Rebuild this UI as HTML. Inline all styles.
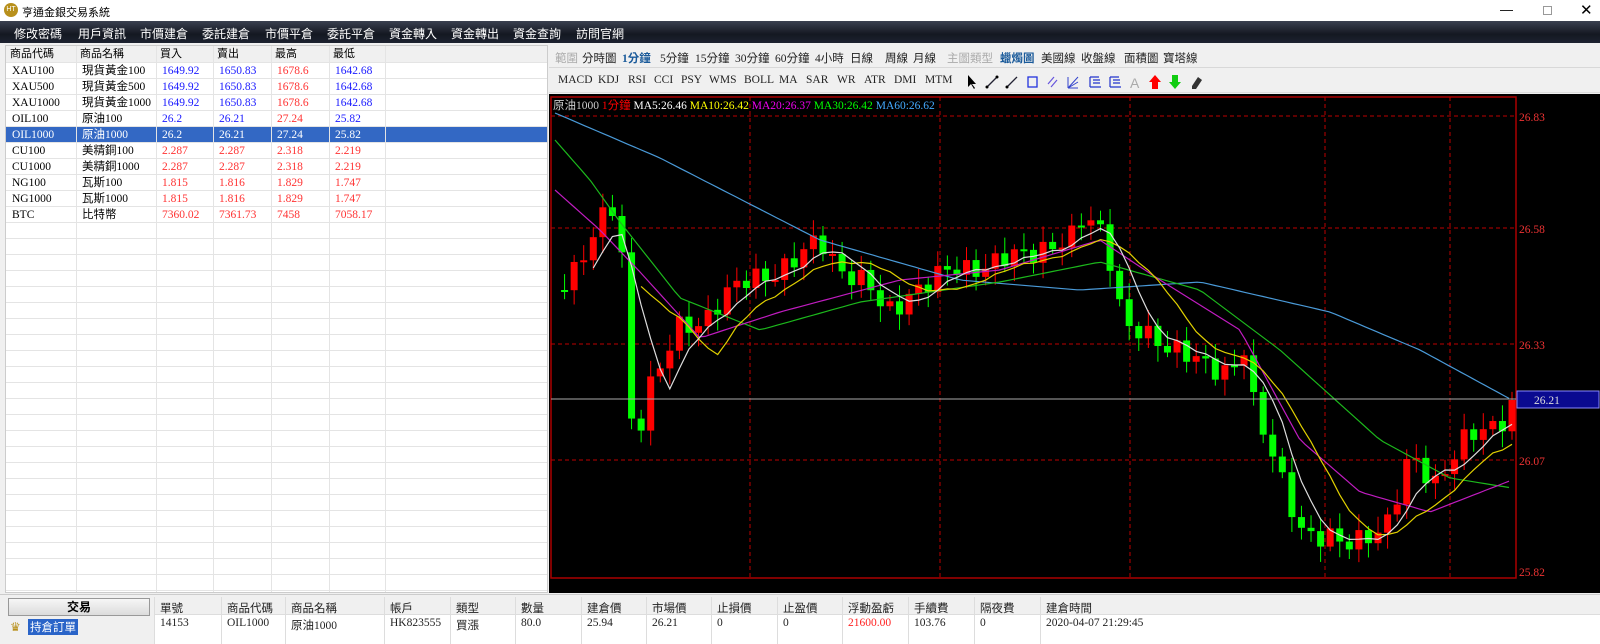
<!DOCTYPE html><html><head><meta charset="utf-8"><style>
*{margin:0;padding:0;box-sizing:border-box;white-space:nowrap}
body{width:1600px;height:644px;overflow:hidden;background:#f0f0f0;font-family:"Liberation Serif","Noto Sans CJK TC",serif;font-size:12px;position:relative}
.abs{position:absolute}
#title{left:0;top:0;width:1600px;height:21px;background:#fff;font-family:"Liberation Sans","Noto Sans CJK TC",sans-serif;font-size:11px}
#menu{left:0;top:21px;width:1600px;height:22px;background:linear-gradient(#3a4050,#141821 60%,#1c2230);color:#fff;font-family:"Liberation Sans","Noto Sans CJK TC",sans-serif;font-size:12px}
#menu span{position:absolute;top:4px}
#list{left:5px;top:45px;width:543px;height:548px;background:#fff;border:1px solid #ccc;overflow:hidden}
.row{position:absolute;left:0;width:543px;height:17px;border-bottom:1px solid #e4e4e4}
.row span{position:absolute;top:0;font-size:11.5px;line-height:16px}
.row i{position:absolute;top:0;width:1px;height:17px;background:#e4e4e4}
.b{color:#1a1aff}.r{color:#ff3333}
.tb{font-family:"Liberation Serif","Noto Sans CJK TC",serif;font-size:11.5px;color:#222;width:1600px;height:644px;pointer-events:none}
.tb span{position:absolute}
</style></head><body>
<div id="title" class="abs">
<div class="abs" style="left:4px;top:3px;width:14px;height:14px;border-radius:50%;background:#b8901c;color:#fff;font-size:7px;line-height:14px;text-align:center">HT</div>
<span class="abs" style="left:22px;top:4px">亨通金銀交易系統</span>
<span class="abs" style="left:1500px;top:2px;font-size:13px">—</span>
<div class="abs" style="left:1543px;top:6px;width:9px;height:9px;border:1px solid #999"></div>
<span class="abs" style="left:1580px;top:1px;font-size:15px">✕</span>
</div>
<div id="menu" class="abs">
<span style="left:14px">修改密碼</span><span style="left:78px">用戶資訊</span><span style="left:140px">市價建倉</span><span style="left:202px">委託建倉</span><span style="left:265px">市價平倉</span><span style="left:327px">委託平倉</span><span style="left:389px">資金轉入</span><span style="left:451px">資金轉出</span><span style="left:513px">資金查詢</span><span style="left:576px">訪問官網</span>
</div>
<div id="list" class="abs"></div>
<div class="abs" style="left:549px;top:45px;width:1051px;height:48px;background:#f0f0f0;border-bottom:1px solid #ddd"></div>
<div class="abs" style="left:549px;top:67px;width:1051px;height:1px;background:#d8d8d8"></div>
<div class="abs tb" style="left:0;top:0">
<span style="left:555px;top:50px;color:#aaa">範圍</span><span style="left:582px;top:50px">分時圖</span><span style="left:622px;top:50px;color:#1a5a9a;font-weight:bold">1分鐘</span><span style="left:660px;top:50px">5分鐘</span><span style="left:695px;top:50px">15分鐘</span><span style="left:735px;top:50px">30分鐘</span><span style="left:775px;top:50px">60分鐘</span><span style="left:815px;top:50px">4小時</span><span style="left:850px;top:50px">日線</span><span style="left:885px;top:50px">周線</span><span style="left:913px;top:50px">月線</span><span style="left:947px;top:50px;color:#aaa">主圖類型</span><span style="left:1000px;top:50px;color:#1a5a9a;font-weight:bold">蠟燭圖</span><span style="left:1041px;top:50px">美國線</span><span style="left:1081px;top:50px">收盤線</span><span style="left:1124px;top:50px">面積圖</span><span style="left:1163px;top:50px">寶塔線</span>
<span style="left:558px;top:74px">MACD</span><span style="left:598px;top:74px">KDJ</span><span style="left:628px;top:74px">RSI</span><span style="left:654px;top:74px">CCI</span><span style="left:681px;top:74px">PSY</span><span style="left:709px;top:74px">WMS</span><span style="left:744px;top:74px">BOLL</span><span style="left:779px;top:74px">MA</span><span style="left:806px;top:74px">SAR</span><span style="left:837px;top:74px">WR</span><span style="left:864px;top:74px">ATR</span><span style="left:894px;top:74px">DMI</span><span style="left:925px;top:74px">MTM</span>
</div>
<svg class="abs" style="left:960px;top:72px" width="250" height="20">
<path d="M8 3l0 12 3-3 3 5 1-1-3-4 4 0z" fill="#000"/>
<line x1="27" y1="15" x2="37" y2="5" stroke="#223" stroke-width="1.3"/><circle cx="27" cy="15" r="1.5"/><circle cx="37" cy="5" r="1.5"/>
<line x1="47" y1="15" x2="57" y2="5" stroke="#223" stroke-width="1.3"/><circle cx="47" cy="15" r="1.5"/>
<rect x="68" y="5" width="9" height="10" fill="none" stroke="#2233dd" stroke-width="1.3"/>
<path d="M88 12l6-7M91 15l6-7" stroke="#6655dd" stroke-width="1.2"/>
<path d="M108 16l10-11M108 16l10-6M108 16l10 0M108 5v11" stroke="#3344cc" stroke-width="1"/>
<path d="M130 5h9M130 5v10M133 8h7M133 11h7M130 15h11" stroke="#2233cc" stroke-width="1.2" fill="none"/>
<path d="M150 5h9M150 5v10M153 8h7M153 11h7M150 15h11" stroke="#2233cc" stroke-width="1.2" fill="none"/>
<text x="170" y="16" fill="#aaa" font-size="14" font-family="Liberation Sans">A</text>
<path d="M195 3l6 7h-3v7h-6v-7h-3z" fill="#f00"/>
<path d="M215 17l6-7h-3v-7h-6v7h-3z" fill="#1c1"/>
<path d="M232 14l6-9 4 3-6 9h-4z" fill="#333"/>
</svg>
<svg class="abs" style="left:549px;top:94px" width="1051" height="499" id="ch"></svg>
<div class="abs" style="left:0;top:594px;width:1600px;height:50px;background:#f0f0f0;border-top:1px solid #ccc"></div>
<div class="abs" style="left:8px;top:598px;width:142px;height:18px;border:1px solid #999;background:linear-gradient(#f6f6f6,#dcdcdc);text-align:center;font-weight:bold;line-height:17px;font-family:'Liberation Sans','Noto Sans CJK TC',sans-serif">交易</div>
<span class="abs" style="left:10px;top:620px;color:#b8901c">♛</span>
<span class="abs" style="left:28px;top:619px;background:#2a64c8;color:#fff;padding:0 2px;font-size:11.5px">持倉訂單</span>
<div class="abs" style="left:154px;top:597px;width:1446px;height:47px;background:#fff"></div>
<div class="abs" style="left:154px;top:597px;width:1446px;height:18px;background:#f0f0f0;border-bottom:1px solid #ddd"></div>
<div class="abs tb" id="bt" style="left:0;top:0"></div>
<script>
var L=document.getElementById('list'),h='';
var cols=[0,70,150,207,265,323,379];
var data=[['商品代碼','商品名稱','買入','賣出','最高','最低'],['XAU100','現貨黃金100','1649.92','1650.83','1678.6','1642.68','b'],['XAU500','現貨黃金500','1649.92','1650.83','1678.6','1642.68','b'],['XAU1000','現貨黃金1000','1649.92','1650.83','1678.6','1642.68','b'],['OIL100','原油100','26.2','26.21','27.24','25.82','b'],['OIL1000','原油1000','26.2','26.21','27.24','25.82','s'],['CU100','美精銅100','2.287','2.287','2.318','2.219','r'],['CU1000','美精銅1000','2.287','2.287','2.318','2.219','r'],['NG100','瓦斯100','1.815','1.816','1.829','1.747','r'],['NG1000','瓦斯1000','1.815','1.816','1.829','1.747','r'],['BTC','比特幣','7360.02','7361.73','7458','7058.17','r']];
for(var i=0;i<34;i++){var d=data[i],tp=i*16+(i>0?1:0);var bg=i==0?'#f0f0f0':(d&&d[6]=='s'?'#3368c4':'#fff');
h+='<div class="row" style="top:'+tp+'px;height:'+(i==0?17:16)+'px;background:'+bg+'">';
for(var c=1;c<7;c++)h+='<i style="left:'+cols[c]+'px"></i>';
if(d){for(var c=0;c<6;c++){var cl='';if(i>0&&c>=2){cl=d[6]=='s'?'':(c==4?'r':(d[6]=='b'?'b':'r'));}
var col=d[6]=='s'?'color:#fff;':'';h+='<span class="'+cl+'" style="'+col+'left:'+(cols[c]+(i==0?4:6))+'px;'+(i==0?'font-family:Liberation Sans,Noto Sans CJK TC,sans-serif;font-size:11px':'')+'">'+d[c]+'</span>';}}
h+='</div>';}
L.innerHTML=h;
var bx=[160,227,291,390,456,521,587,652,717,783,848,914,980,1046],
bh=['單號','商品代碼','商品名稱','帳戶','類型','數量','建倉價','市場價','止損價','止盈價','浮動盈虧','手續費','隔夜費','建倉時間'],
bv=['14153','OIL1000','原油1000','HK823555','買漲','80.0','25.94','26.21','0','0','21600.00','103.76','0','2020-04-07 21:29:45'],o='';
for(var i=0;i<14;i++){o+='<span style="left:'+bx[i]+'px;top:600px">'+bh[i]+'</span><span style="left:'+bx[i]+'px;top:617px;'+(i==10?'color:#f22':'')+'">'+bv[i]+'</span>';
o+='<span style="left:'+(bx[i]-6)+'px;top:597px;width:1px;height:47px;background:#ddd"></span>';}
document.getElementById('bt').innerHTML=o;
var S=document.getElementById('ch'),X0=549,Y0=94,s='';
s+='<rect width="1051" height="499" fill="#000"/>';
s+='<rect x="2" y="3" width="965" height="481" fill="none" stroke="#a00" stroke-width="1.5"/>';
var gy=[116,228,344,460],lab=['26.83','26.58','26.33','26.07'];
gy.forEach(function(y,i){s+='<line x1="2" y1="'+(y-Y0)+'" x2="967" y2="'+(y-Y0)+'" stroke="#b00" stroke-dasharray="4,3"/>';s+='<text x="970" y="'+(y-Y0+5)+'" fill="#e33" font-size="11.5" font-family="Liberation Serif">'+lab[i]+'</text>';});
s+='<text x="970" y="482" fill="#e33" font-size="11.5" font-family="Liberation Serif">25.82</text>';
[750,940,1130,1325,1450].forEach(function(x){s+='<line x1="'+(x-X0)+'" y1="3" x2="'+(x-X0)+'" y2="484" stroke="#b00" stroke-dasharray="4,3"/>';});
function interp(pts,x){for(var i=1;i<pts.length;i++){if(x<=pts[i][0]){var a=pts[i-1],b=pts[i];return a[1]+(b[1]-a[1])*(x-a[0])/(b[0]-a[0]);}}return pts[pts.length-1][1];}
var P=[[555,290],[575,265],[595,235],[610,210],[620,215],[628,380],[635,455],[645,390],[660,370],[680,330],[700,320],[720,300],[760,275],[800,260],[820,240],[840,265],[870,290],[885,315],[910,290],[930,285],[960,265],[1000,265],[1040,245],[1070,245],[1085,215],[1105,230],[1115,280],[1125,330],[1150,340],[1180,345],[1210,375],[1230,370],[1245,340],[1255,410],[1280,480],[1300,525],[1330,540],[1345,550],[1370,530],[1390,520],[1410,460],[1435,480],[1460,445],[1490,430],[1512,405]];
var N=101,cl=[],xs=[];
for(var i=0;i<N;i++){var x=555+i*9.57;xs.push(x);cl.push(interp(P,x)+Math.sin(i*2.3)*10+Math.sin(i*0.9)*6);}
cl[N-1]=400;
var cs='';
for(var i=1;i<N;i++){var op=cl[i-1],c=cl[i],x=xs[i]-X0;var up=c<op;var col=up?'#f00':'#0f0';var tp=Math.min(op,c),bt=Math.max(op,c);if(bt-tp<2)bt=tp+2;
var hi=tp-4-Math.abs(Math.sin(i*1.7))*12,lo=bt+4+Math.abs(Math.cos(i*1.3))*12;
cs+='<line x1="'+x+'" y1="'+(hi-Y0)+'" x2="'+x+'" y2="'+(lo-Y0)+'" stroke="'+col+'"/><rect x="'+(x-3.5)+'" y="'+(tp-Y0)+'" width="7" height="'+(bt-tp)+'" fill="'+col+'"/>';}
s+=cs;
function poly(arr,col){var p=arr.map(function(a){return (a[0]-X0).toFixed(1)+','+(a[1]-Y0).toFixed(1)}).join(' ');return '<polyline points="'+p+'" fill="none" stroke="'+col+'" stroke-width="1.2"/>';}
function sm(pts){var r=[];for(var x=555;x<=1512;x+=6)r.push([x,interp(pts,x)]);return r;}
s+=poly(sm([[555,113],[660,158],[820,240],[960,280],[1080,290],[1200,282],[1330,312],[1420,350],[1512,400]]),'#4a9ad8');
s+=poly(sm([[555,140],[590,180],[620,222],[680,298],[760,330],[860,302],[1000,282],[1100,262],[1200,290],[1280,350],[1380,440],[1450,478],[1512,488]]),'#1cb81c');
s+=poly(sm([[555,190],[600,230],[640,272],[700,338],[780,312],[900,280],[1000,270],[1100,240],[1160,280],[1240,330],[1300,440],[1360,492],[1430,512],[1512,480]]),'#c01cc0');
function ma(n){var r=[];for(var i=n-1;i<N;i++){var t=0;for(var k=0;k<n;k++)t+=cl[i-k];r.push([xs[i],t/n]);}return r;}
s+=poly(ma(10),'#e0d000');s+=poly(ma(5),'#ddd');
s+='<line x1="2" y1="305" x2="967" y2="305" stroke="#aaa"/>';
s+='<rect x="968" y="297" width="82" height="17" fill="#0a0a90" stroke="#8888ff"/><text x="985" y="310" fill="#ddd" font-size="11.5" font-family="Liberation Serif">26.21</text>';
s+='<text x="4" y="15" font-size="11.5" font-family="Liberation Serif,Noto Sans CJK TC"><tspan fill="#ccc">原油1000 </tspan><tspan fill="#f00">1分鐘 </tspan><tspan fill="#fff">MA5:26.46 </tspan><tspan fill="#ff0">MA10:26.42 </tspan><tspan fill="#e0e">MA20:26.37 </tspan><tspan fill="#0f0">MA30:26.42 </tspan><tspan fill="#4af">MA60:26.62</tspan></text>';
S.innerHTML=s;
</script>
</body></html>
